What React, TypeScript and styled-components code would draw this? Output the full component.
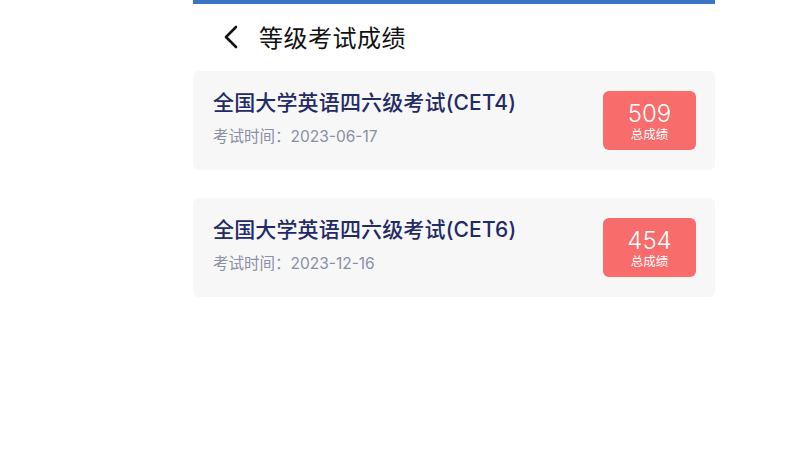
import React from 'react';
import styled, { createGlobalStyle } from 'styled-components';

const GlobalStyle = createGlobalStyle`
    html, body {
        margin: 0;
        padding: 0;
        background: #ffffff;
        font-family: Inter, "Noto Sans CJK SC", sans-serif;
    }
`;

const Page = styled.div`
    width: 522px;
    margin: 0 auto 0 193px;
    display: flex;
    flex-direction: column;
`;

const TopBar = styled.div`
    height: 4px;
    background: #3a75c4;
`;

const Header = styled.div`
    height: 67px;
    display: flex;
    align-items: center;
    padding-left: 28px;
    gap: 16px;
    box-sizing: border-box;
    padding-bottom: 2px;
`;

const BackIcon = styled.svg`
    width: 22px;
    height: 24px;
    flex-shrink: 0;
`;

const Title = styled.h1`
    margin: 0;
    font-size: 24px;
    font-weight: 400;
    color: #111111;
    letter-spacing: 0.5px;
    font-family: "Noto Sans CJK SC", sans-serif;
`;

const List = styled.div`
    display: flex;
    flex-direction: column;
    gap: 28px;
`;

const Card = styled.div`
    height: 99px;
    background: #f7f7f8;
    border-radius: 6px;
    display: flex;
    align-items: center;
    justify-content: space-between;
    padding: 0 19px 0 20px;
    box-sizing: border-box;
`;

const Info = styled.div`
    display: flex;
    flex-direction: column;
    gap: 10px;
    margin-top: -5px;
`;

const ExamName = styled.div`
    font-size: 21px;
    font-weight: 500;
    color: #232b66;
    line-height: 28px;
    letter-spacing: 0.15px;
`;

const ExamDate = styled.div`
    font-size: 15.5px;
    color: #8a8ea6;
    line-height: 20px;
`;

const ScoreBox = styled.div`
    width: 93px;
    height: 59px;
    background: #f86c6b;
    border-radius: 6px;
    color: #ffffff;
    display: flex;
    flex-direction: column;
    align-items: center;
    justify-content: center;
`;

const ScoreValue = styled.div`
    font-size: 24px;
    line-height: 22px;
    margin-top: 2px;
    font-weight: 300;
`;

const ScoreLabel = styled.div`
    font-size: 12.5px;
    line-height: 14px;
    margin-top: 2px;
    font-family: "Noto Sans CJK SC", sans-serif;
`;

const exams = [
    { name: '全国大学英语四六级考试(CET4)', date: '2023-06-17', score: 509 },
    { name: '全国大学英语四六级考试(CET6)', date: '2023-12-16', score: 454 },
];

const App: React.FC = () => {
    return (
        <>
            <GlobalStyle />
            <Page>
                <TopBar />
                <Header>
                    <BackIcon viewBox="0 0 22 24" fill="none">
                        <path d="M15 2 L5 12 L15 22" stroke="#111" strokeWidth="2.6" strokeLinecap="round" strokeLinejoin="round" />
                    </BackIcon>
                    <Title>等级考试成绩</Title>
                </Header>
                <List>
                    {exams.map((exam) => (
                        <Card key={exam.name}>
                            <Info>
                                <ExamName>{exam.name}</ExamName>
                                <ExamDate>考试时间：{exam.date}</ExamDate>
                            </Info>
                            <ScoreBox>
                                <ScoreValue>{exam.score}</ScoreValue>
                                <ScoreLabel>总成绩</ScoreLabel>
                            </ScoreBox>
                        </Card>
                    ))}
                </List>
            </Page>
        </>
    );
};

export default App;
